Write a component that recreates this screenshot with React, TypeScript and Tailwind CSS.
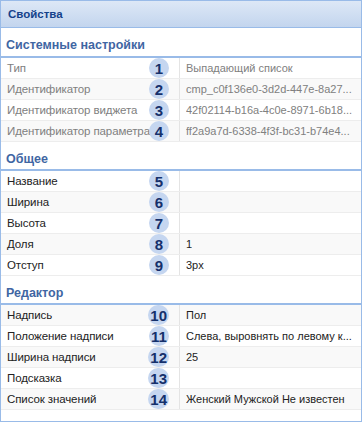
import React from "react";

type Row = { label: string; value: string; n: number };
type Section = { title: string; rows: Row[]; muted?: boolean; first?: boolean };

const sections: Section[] = [
  {
    title: "Системные настройки",
    muted: true,
    first: true,
    rows: [
      { label: "Тип", value: "Выпадающий список", n: 1 },
      { label: "Идентификатор", value: "cmp_c0f136e0-3d2d-447e-8a27...", n: 2 },
      { label: "Идентификатор виджета", value: "42f02114-b16a-4c0e-8971-6b18...", n: 3 },
      { label: "Идентификатор параметра", value: "ff2a9a7d-6338-4f3f-bc31-b74e4...", n: 4 },
    ],
  },
  {
    title: "Общее",
    rows: [
      { label: "Название", value: "", n: 5 },
      { label: "Ширина", value: "", n: 6 },
      { label: "Высота", value: "", n: 7 },
      { label: "Доля", value: "1", n: 8 },
      { label: "Отступ", value: "3px", n: 9 },
    ],
  },
  {
    title: "Редактор",
    rows: [
      { label: "Надпись", value: "Пол", n: 10 },
      { label: "Положение надписи", value: "Слева, выровнять по левому к...", n: 11 },
      { label: "Ширина надписи", value: "25", n: 12 },
      { label: "Подсказка", value: "", n: 13 },
      { label: "Список значений", value: "Женский Мужской Не известен", n: 14 },
    ],
  },
];

export default function App() {
  let idx = 0;
  return (
    <div
      className="w-[362px] h-[422px] border border-[#99bbe8] bg-white overflow-hidden text-[11.5px] leading-[14px]"
      style={{ fontFamily: "'Liberation Sans', Arial, sans-serif" }}
    >
      <div className="h-[27px] border-b border-[#99bbe8] bg-gradient-to-b from-[#dde8f6] to-[#c3d5ee] flex items-center px-[7px] font-bold text-[11.5px] text-[#15428b]">
        Свойства
      </div>
      {sections.map((s) => (
        <div key={s.title}>
          <div
            className={`${s.first ? "h-[30px] pb-[4px]" : "h-[29px] pb-[3px]"} flex items-end pl-[5px] font-bold text-[12.5px] text-[#3f66a3] border-b-2 border-[#99bbe8]`}
          >
            {s.title}
          </div>
          {s.rows.map((r) => {
            const alt = idx++ % 2 === 1;
            return (
              <div
                key={r.n}
                className={`h-[21px] flex border-b border-[#ededed] ${alt ? "bg-[#f9f9f9]" : "bg-white"} ${s.muted ? "text-[#808080]" : "text-[#222222]"}`}
              >
                <div className="relative w-[179px] shrink-0 border-r border-[#e4e4e4] flex items-center pl-[6px] whitespace-nowrap">
                  <span className="tracking-[-0.1px]">{r.label}</span>
                  <span className="absolute right-[10px] top-1/2 -translate-y-1/2 h-[20px] min-w-[20px] px-[2px] rounded-full bg-[#c5d6f0] flex items-center justify-center font-bold text-[15px] text-[#15306b] leading-none">
                    {r.n}
                  </span>
                </div>
                <div className="flex-1 min-w-0 flex items-center pl-[6px] pr-[3px] text-[11px]">
                  <span className="whitespace-nowrap overflow-hidden">{r.value}</span>
                </div>
              </div>
            );
          })}
        </div>
      ))}
    </div>
  );
}
